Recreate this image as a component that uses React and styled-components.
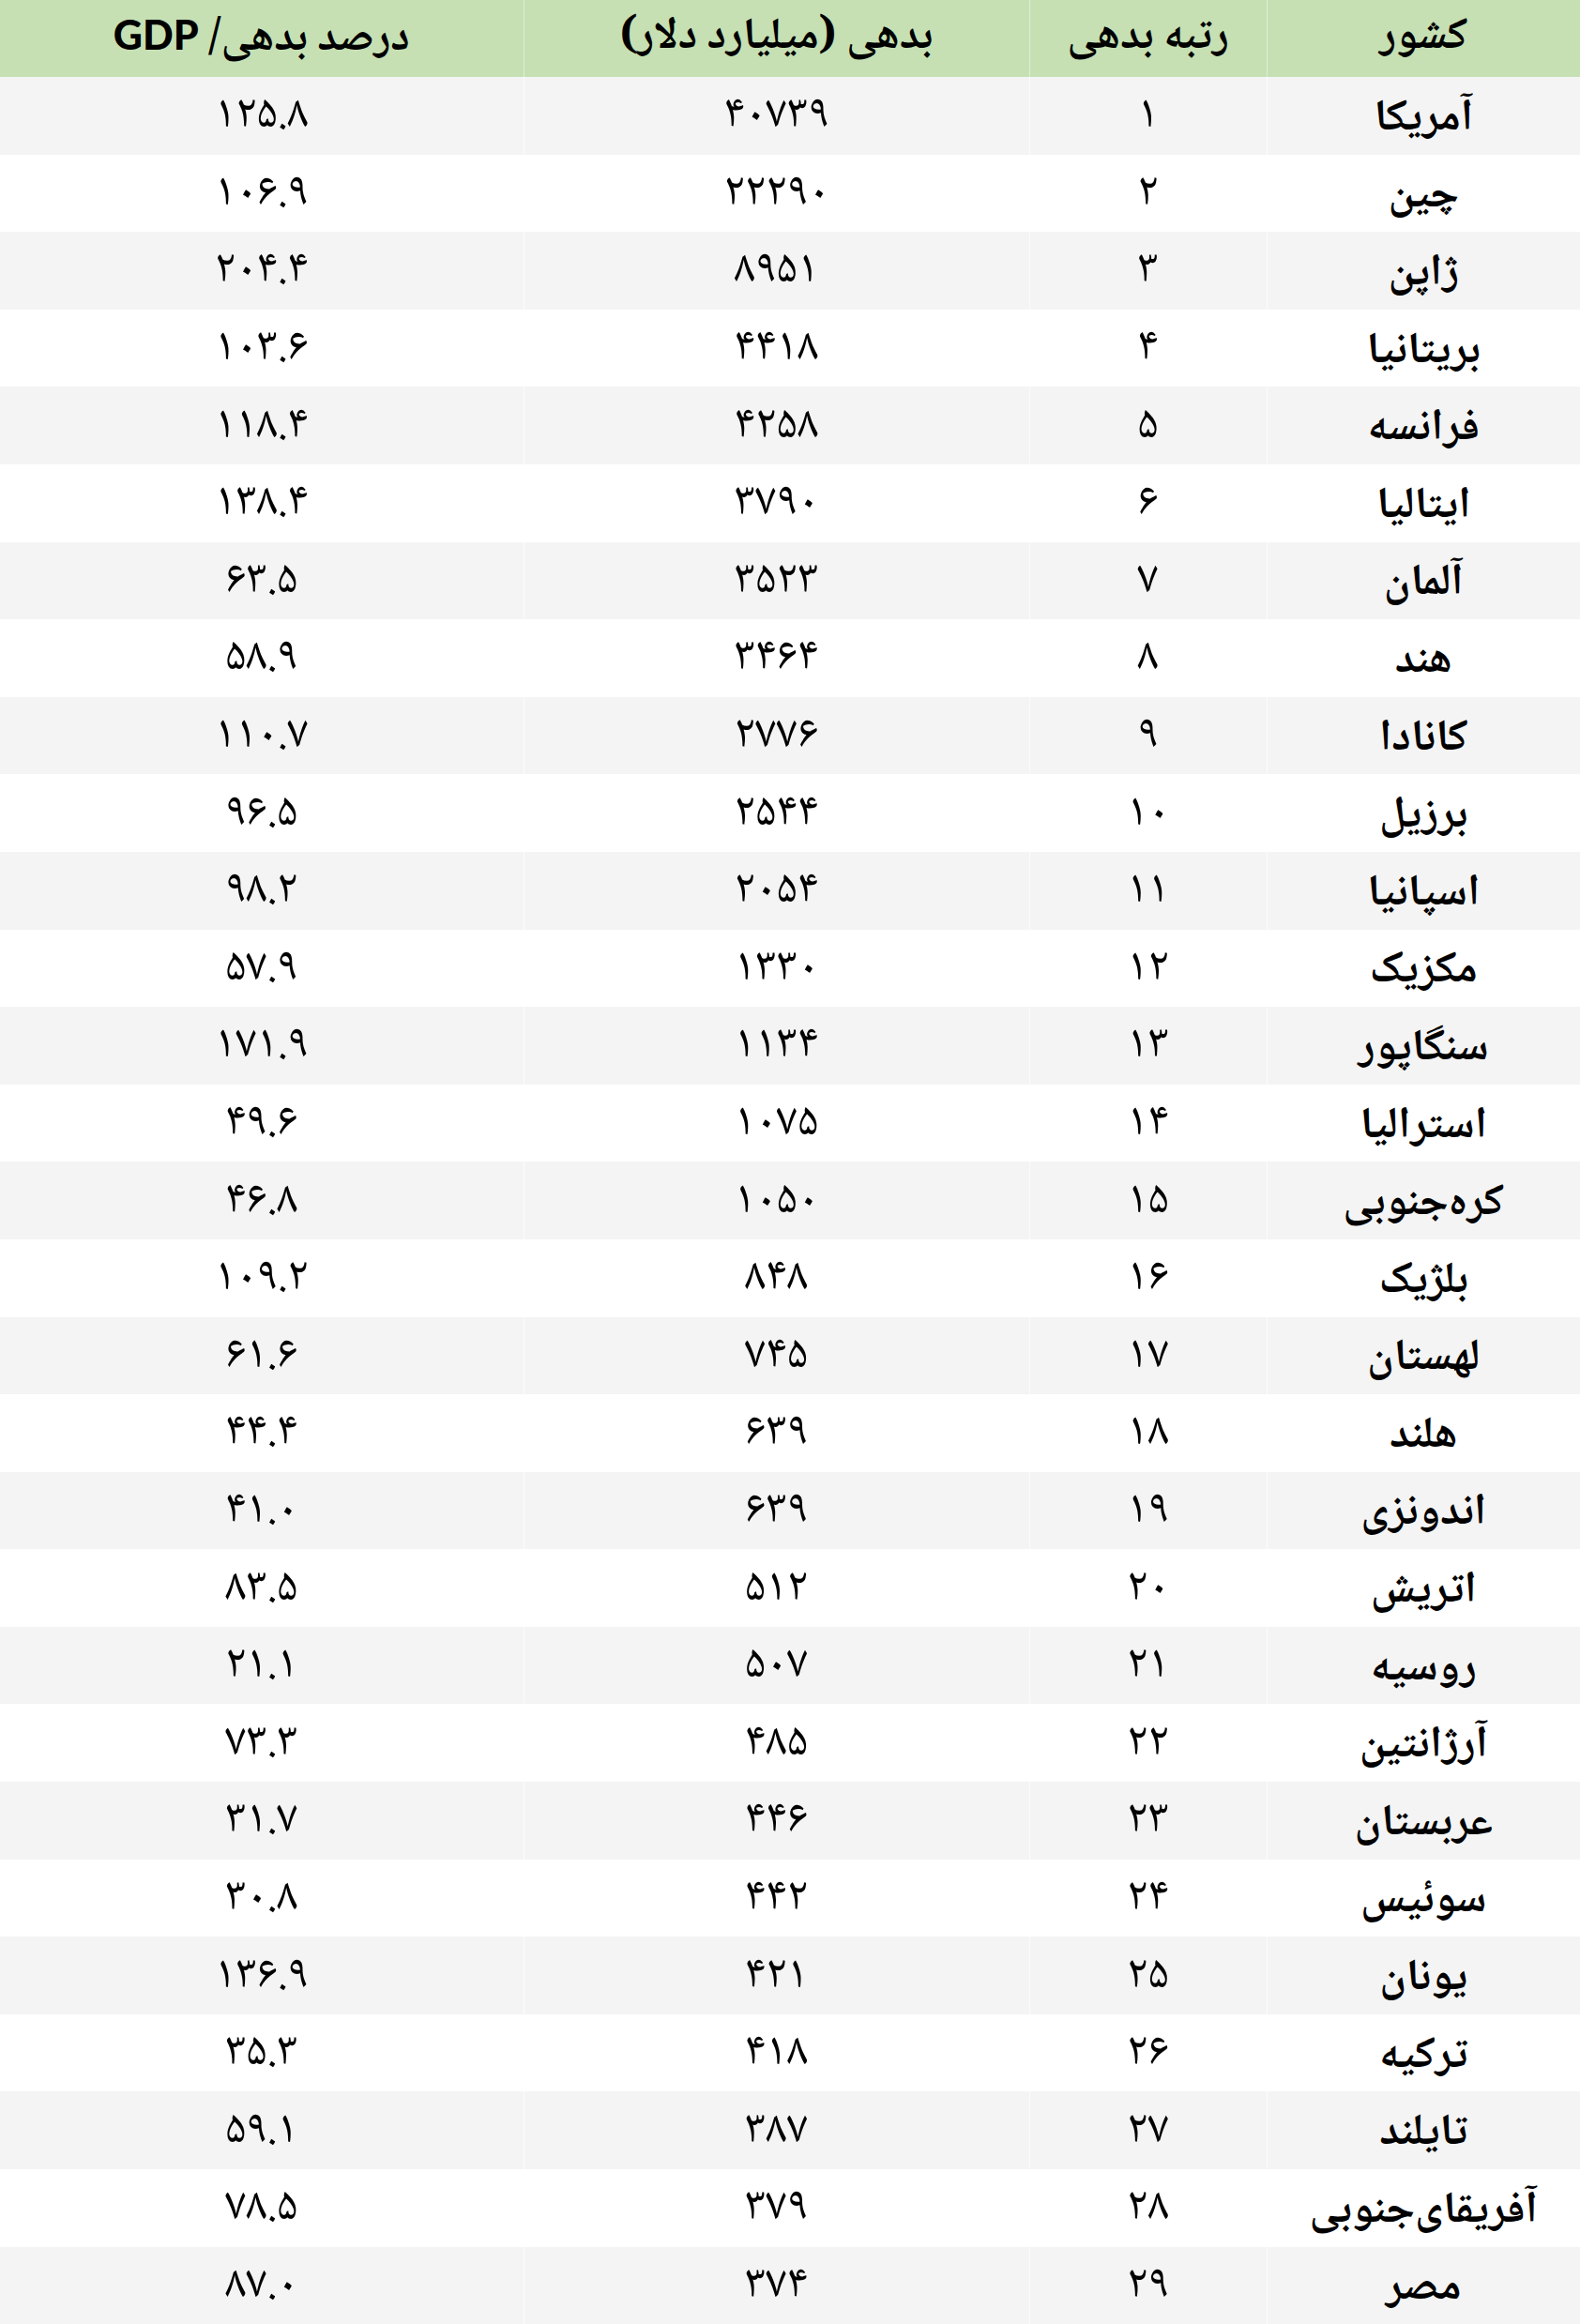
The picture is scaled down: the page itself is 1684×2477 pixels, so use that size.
import React from "react";
import styled, { createGlobalStyle } from "styled-components";

const GlobalStyle = createGlobalStyle`
  html, body {
    margin: 0;
    padding: 0;
    background: #ffffff;
  }
`;

const colors = {
  head: "#c6e0b4",
  stripe: "#f4f4f4",
  white: "#ffffff",
  text: "#000000",
};

const persianFont = `"Noto Naskh Arabic", "Noto Sans Arabic", "DejaVu Sans", sans-serif`;

const Table = styled.table`
  width: 1684px;
  height: 2477px;
  border-collapse: collapse;
  table-layout: fixed;
  direction: rtl;
  font-family: ${persianFont};
  color: ${colors.text};
`;

const HeadCell = styled.th`
  height: 82px;
  background: ${colors.head};
  font-size: 47px;
  font-weight: 700;
  line-height: 1;
  text-align: center;
  vertical-align: middle;
  padding: 0;
  border-left: 1px solid rgba(255, 255, 255, 0.45);
  &:last-child {
    border-left: none;
  }
`;

const Latin = styled.span`
  font-family: Lato, "Liberation Sans", sans-serif;
  font-weight: 900;
  font-size: 43px;
`;

const Row = styled.tr`
  height: 82.6px;
  background: ${(p) => (p.$striped ? colors.stripe : colors.white)};
`;

const Cell = styled.td`
  padding: ${(p) => (p.$name ? "10px 0 0" : "4px 0 0")};
  text-align: center;
  vertical-align: middle;
  line-height: 1;
  font-size: ${(p) => (p.$name ? "47px" : "50px")};
  font-weight: ${(p) => (p.$name ? 700 : 400)};
  border-left: 1px solid rgba(255, 255, 255, 0.6);
  &:last-child {
    border-left: none;
  }
`;

const fa = (v) => String(v).replace(/\d/g, (d) => "۰۱۲۳۴۵۶۷۸۹"[d]);

const rows = [
  ["آمریکا", 40739, "125.8"],
  ["چین", 22290, "106.9"],
  ["ژاپن", 8951, "204.4"],
  ["بریتانیا", 4418, "103.6"],
  ["فرانسه", 4258, "118.4"],
  ["ایتالیا", 3790, "138.4"],
  ["آلمان", 3523, "63.5"],
  ["هند", 3464, "58.9"],
  ["کانادا", 2776, "110.7"],
  ["برزیل", 2544, "96.5"],
  ["اسپانیا", 2054, "98.2"],
  ["مکزیک", 1330, "57.9"],
  ["سنگاپور", 1134, "171.9"],
  ["استرالیا", 1075, "49.6"],
  ["کره\u200cجنوبی", 1050, "46.8"],
  ["بلژیک", 848, "109.2"],
  ["لهستان", 745, "61.6"],
  ["هلند", 639, "44.4"],
  ["اندونزی", 639, "41.0"],
  ["اتریش", 512, "83.5"],
  ["روسیه", 507, "21.1"],
  ["آرژانتین", 485, "73.3"],
  ["عربستان", 446, "31.7"],
  ["سوئیس", 442, "30.8"],
  ["یونان", 421, "136.9"],
  ["ترکیه", 418, "35.3"],
  ["تایلند", 387, "59.1"],
  ["آفریقای\u200cجنوبی", 379, "78.5"],
  ["مصر", 374, "87.0"],
];

export default function App() {
  return (
    <>
      <GlobalStyle />
      <Table dir="rtl">
        <colgroup>
          <col style={{ width: 334 }} />
          <col style={{ width: 253 }} />
          <col style={{ width: 539 }} />
          <col style={{ width: 558 }} />
        </colgroup>
        <thead>
          <tr>
            <HeadCell>کشور</HeadCell>
            <HeadCell>رتبه بدهی</HeadCell>
            <HeadCell>بدهی (میلیارد دلار)</HeadCell>
            <HeadCell>
              درصد بدهی/ <Latin>GDP</Latin>
            </HeadCell>
          </tr>
        </thead>
        <tbody>
          {rows.map(([name, debt, ratio], i) => (
            <Row key={name} $striped={i % 2 === 0}>
              <Cell $name>{name}</Cell>
              <Cell>{fa(i + 1)}</Cell>
              <Cell>{fa(debt)}</Cell>
              <Cell>{fa(ratio)}</Cell>
            </Row>
          ))}
        </tbody>
      </Table>
    </>
  );
}
